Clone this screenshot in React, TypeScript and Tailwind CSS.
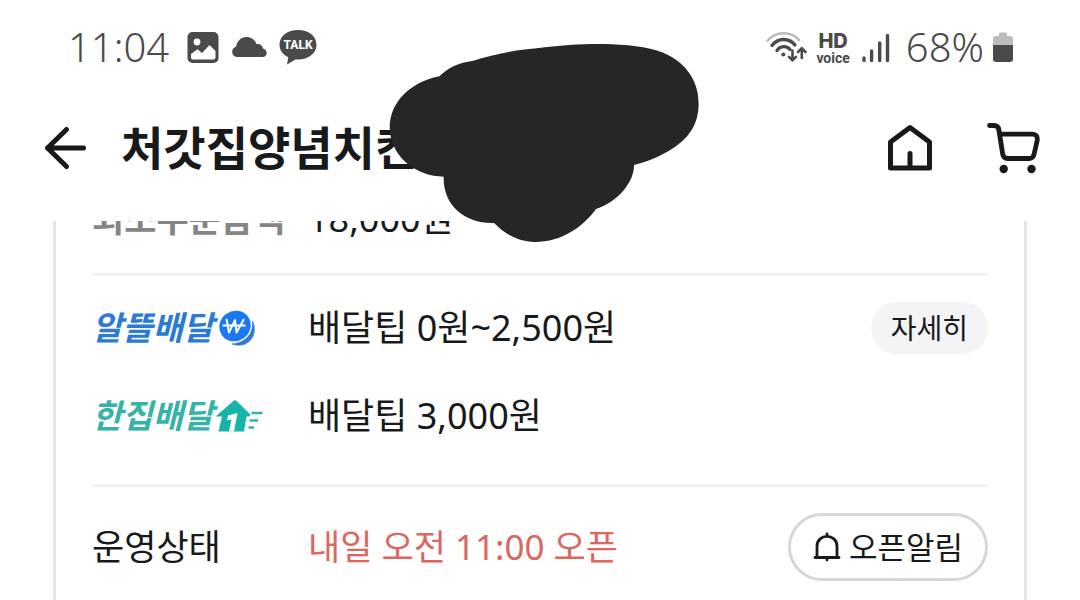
import React from "react";

function PictureIcon() {
  return (
    <svg className="h-8 w-8" viewBox="0 0 32 32" aria-hidden="true">
      <rect x="0.5" y="1" width="31" height="31" rx="5" fill="#4a4a4a" />
      <circle cx="10" cy="11" r="3.4" fill="#fff" />
      <path d="M4 23 L10.500 18.200 L15 22 L22.500 14 L28.500 20 V26.500 Q28.500 28.500 26.500 28.500 H6 Q4 28.500 4 26.500Z" fill="#fff" />
    </svg>
  );
}

function CloudIcon() {
  return (
    <svg className="h-8 w-9" viewBox="0 0 36 32" aria-hidden="true">
      <path d="M5.500 26 A5.300 5.300 0 0 1 5 15.700 C6 10 10 6 15.500 6 C20.500 6 24 9 25.500 13 C29 12.500 31.500 14.500 32 17.500 C37 18.500 37 26 31.500 26Z" fill="#4a4a4a" />
    </svg>
  );
}

function TalkIcon() {
  return (
    <svg className="h-9 w-[38px]" viewBox="0 0 38 36" aria-hidden="true">
      <path d="M19 1 C29.500 1 37.500 7 37.500 15.800 C37.500 24.500 29.500 30.500 19 30.500 L16.500 30.400 L8 35.500 L9.300 28.300 C4 25.800 0.500 21.500 0.500 15.800 C0.500 7 8.500 1 19 1Z" fill="#4a4a4a" />
      <text x="19" y="20" textAnchor="middle" fontFamily="Roboto, sans-serif" fontWeight="800" fontSize="12" fill="#fff">
        TALK
      </text>
    </svg>
  );
}

function WifiIcon() {
  return (
    <svg className="h-9 w-[42px]" viewBox="0 0 42 36" fill="none" strokeLinecap="round" aria-hidden="true">
      <path d="M1.500 11.500 C10 2 25 2 33 11" stroke="#b9b9b9" strokeWidth="2.600" />
      <path d="M6 16.500 C12 8.500 23 8.500 29 16" stroke="#4a4a4a" strokeWidth="3.400" />
      <path d="M11 21.500 C14 16.500 21 16.500 24 20.500" stroke="#4a4a4a" strokeWidth="3.400" />
      <circle cx="17.300" cy="25.500" r="2" fill="#4a4a4a" />
      <g stroke="#4a4a4a" strokeWidth="2.600" strokeLinejoin="round">
        <path d="M26.500 21.500 V31 M23 27.800 L26.500 31.300 L30 27.800" />
        <path d="M35.800 29 V19.500 M32 23 L35.800 19.200 L39.500 23" />
      </g>
    </svg>
  );
}

function SignalIcon() {
  return (
    <svg className="h-8 w-7" viewBox="0 0 28 32" stroke="#4a4a4a" strokeWidth="3.400" strokeLinecap="round" aria-hidden="true">
      <path d="M2 27 V29.500 M9.600 20 V29.500 M17.700 12 V29.500 M25.500 4.500 V29.500" />
    </svg>
  );
}

function BatteryIcon() {
  return (
    <svg className="h-8 w-[22px]" viewBox="0 0 22 32" aria-hidden="true">
      <path d="M1 16 V8 Q1 5 4 5 H7 V3 Q7 1.500 8.500 1.500 H13.500 Q15 1.500 15 3 V5 H18 Q21 5 21 8 V16Z" fill="#bcbcbc" />
      <path d="M1 14 H21 V28 Q21 31 18 31 H4 Q1 31 1 28Z" fill="#4a4a4a" />
    </svg>
  );
}

function BackIcon() {
  return (
    <svg className="h-12 w-12" viewBox="0 0 48 48" fill="none" stroke="#17191a" strokeWidth="5" strokeLinecap="round" strokeLinejoin="round" aria-hidden="true">
      <path d="M42.500 24 H6.500 M25.500 5.500 L6.500 24 L25.500 42.500" />
    </svg>
  );
}

function HomeIcon() {
  return (
    <svg className="h-12 w-12" viewBox="0 0 48 48" fill="none" stroke="#17191a" strokeWidth="5" strokeLinecap="round" strokeLinejoin="round" aria-hidden="true">
      <path d="M4.500 18 L24 3.500 L43.500 18 V44 H4.500Z M24 44 V29.500" />
    </svg>
  );
}

function CartIcon() {
  return (
    <svg className="h-[52px] w-[54px]" viewBox="0 0 54 52" fill="none" stroke="#17191a" strokeWidth="4.800" strokeLinecap="round" strokeLinejoin="round" aria-hidden="true">
      <path d="M3.500 3.500 H8 Q12.300 3.500 12.900 8 L16.700 32 Q17.300 36.500 21.800 36.500 H43 Q47 36.500 48 32.500 L51.200 18.500 Q52 12.200 46.500 12.200 H14" />
      <circle cx="17.700" cy="47" r="4.200" fill="#17191a" stroke="none" />
      <circle cx="45.500" cy="47" r="4.200" fill="#17191a" stroke="none" />
    </svg>
  );
}

function WonCoinIcon() {
  return (
    <svg className="h-9 w-9" viewBox="0 0 36 36" fill="none" aria-hidden="true">
      <path d="M33.300 11 C35 22 28 32.500 13 34 C22 37.500 33.500 33.500 35.200 22 C35.800 17 35 13.500 33.300 11Z" fill="#2b7bd6" stroke="#2b7bd6" strokeWidth="0.600" />
      <ellipse cx="16" cy="16" rx="16" ry="15" transform="rotate(-35 16 16)" fill="#1a78f2" />
      <path d="M7.500 9 L10 22.500 L16 10 L17.500 22.500 L25 9 M3.500 15.500 H26.500" stroke="#fff" strokeWidth="2" strokeLinejoin="round" />
    </svg>
  );
}

function FastHouseIcon() {
  return (
    <svg className="h-9 w-12" viewBox="0 0 48 36" aria-hidden="true">
      <path d="M0.500 18.500 L19 2.500 Q20 1.700 21 2.500 L35 16 Q36 18 34 18.500 H31.500 L29 33.500 H3.500 L7 18.500Z" fill="#17b5a9" />
      <path d="M13 17.500 L22.500 15 L19 33.500 H14 L16.500 21.500 L12 22.300Z" fill="#fff" />
      <path d="M36.500 15 H47.500 M34.500 22.500 H43 M33.500 29.500 H39" stroke="#2cb5aa" strokeWidth="2.600" />
    </svg>
  );
}

function BellIcon() {
  return (
    <svg className="h-[30px] w-7" viewBox="0 0 28 30" fill="none" stroke="#17191a" strokeWidth="2.800" strokeLinecap="round" aria-hidden="true">
      <path d="M4 25 V14.500 C4 1 24 1 24 14.500 V25 M2 25.500 H26 M14 1.800 V4 M14 26 V28" />
    </svg>
  );
}

function Scribble() {
  return (
    <svg className="pointer-events-none absolute top-[30px] left-[370px] h-[220px] w-[350px]" viewBox="0 0 1050 660" aria-hidden="true">
      <path
        d="M208 139 C235 112 265 98 310 92 C360 76 430 60 500 55 C570 45 650 41 700 42 C770 43 830 50 880 68 C940 93 975 140 983 190 C991 240 982 285 950 320 C915 360 850 390 792 405 C793 455 745 515 678 537 C640 590 575 636 495 636 C440 634 405 612 372 579 C285 582 218 525 221 440 C140 438 75 388 61 315 C48 235 105 160 208 139Z"
        fill="#262626"
      />
    </svg>
  );
}

const label = "w-[216px] shrink-0 text-[35px]";
const brand = "flex w-[216px] shrink-0 items-center text-[33px] font-bold italic";

export default function App() {
  return (
    <div className="relative h-screen overflow-hidden bg-white font-['Noto_Sans','Noto_Sans_CJK_KR',sans-serif] text-[36px] leading-[52px] text-[#17191a]">
      <div className="flex h-[94px] items-center justify-between pr-[66px] pl-[68px] text-[40px] text-[#4a4a4a]">
        <div className="flex items-center gap-3">
          <time className="mr-1.5 font-light">11:04</time>
          <PictureIcon />
          <CloudIcon />
          <TalkIcon />
        </div>
        <div className="flex items-center gap-2">
          <WifiIcon />
          <div className="mr-1 flex flex-col items-center pt-0.5 font-['Roboto',sans-serif] font-bold">
            <span className="font-['Inter',sans-serif] text-[20px] leading-5 font-extrabold">HD</span>
            <span className="text-[14px] leading-[14px]">voice</span>
          </div>
          <SignalIcon />
          <span className="ml-2 font-light">68%</span>
          <BatteryIcon />
        </div>
      </div>

      <header className="flex h-[127px] items-center pr-10 pb-5 pl-[41px]">
        <button type="button" aria-label="뒤로" className="mr-8">
          <BackIcon />
        </button>
        <h1 className="grow pb-0.5 text-[46px] font-bold whitespace-nowrap">처갓집양념치킨</h1>
        <div className="flex items-center gap-[52px]">
          <button type="button" aria-label="홈">
            <HomeIcon />
          </button>
          <button type="button" aria-label="장바구니">
            <CartIcon />
          </button>
        </div>
      </header>

      <main className="mx-[53px] h-full overflow-hidden border-x-[3px] border-[#e2e5e5] px-9">
        <section className="border-b-[3px] border-[#f3f4f5] pb-7">
          <div className="-mt-7 flex">
            <span className={label + " font-bold text-[#858585]"}>최소주문금액</span>
            <span>18,000원</span>
          </div>
        </section>
        <section className="flex flex-col gap-9 border-b-[3px] border-[#f3f4f5] pt-[26px] pb-[42px]">
          <div className="flex items-center">
            <span className={brand + " gap-1.5 text-[#2b7bd6]"}>
              알뜰배달
              <WonCoinIcon />
            </span>
            <span className="grow">배달팁 0원~2,500원</span>
            <button type="button" className="rounded-full bg-[#f3f4f6] px-5 text-[28px]">
              자세히
            </button>
          </div>
          <div className="flex items-center">
            <span className={brand + " gap-0.5 text-[#36b3a8]"}>
              한집배달
              <FastHouseIcon />
            </span>
            <span>배달팁 3,000원</span>
          </div>
        </section>
        <section className="flex items-center pt-[26px]">
          <span className={label}>운영상태</span>
          <span className="grow text-[35px] text-[#dc6660]">내일 오전 11:00 오픈</span>
          <button type="button" className="flex h-[68px] items-center gap-2 rounded-full border-[3px] border-[#d5d7d8] px-[22px] text-[31px]">
            <BellIcon />
            오픈알림
          </button>
        </section>
      </main>

      <Scribble />
    </div>
  );
}
